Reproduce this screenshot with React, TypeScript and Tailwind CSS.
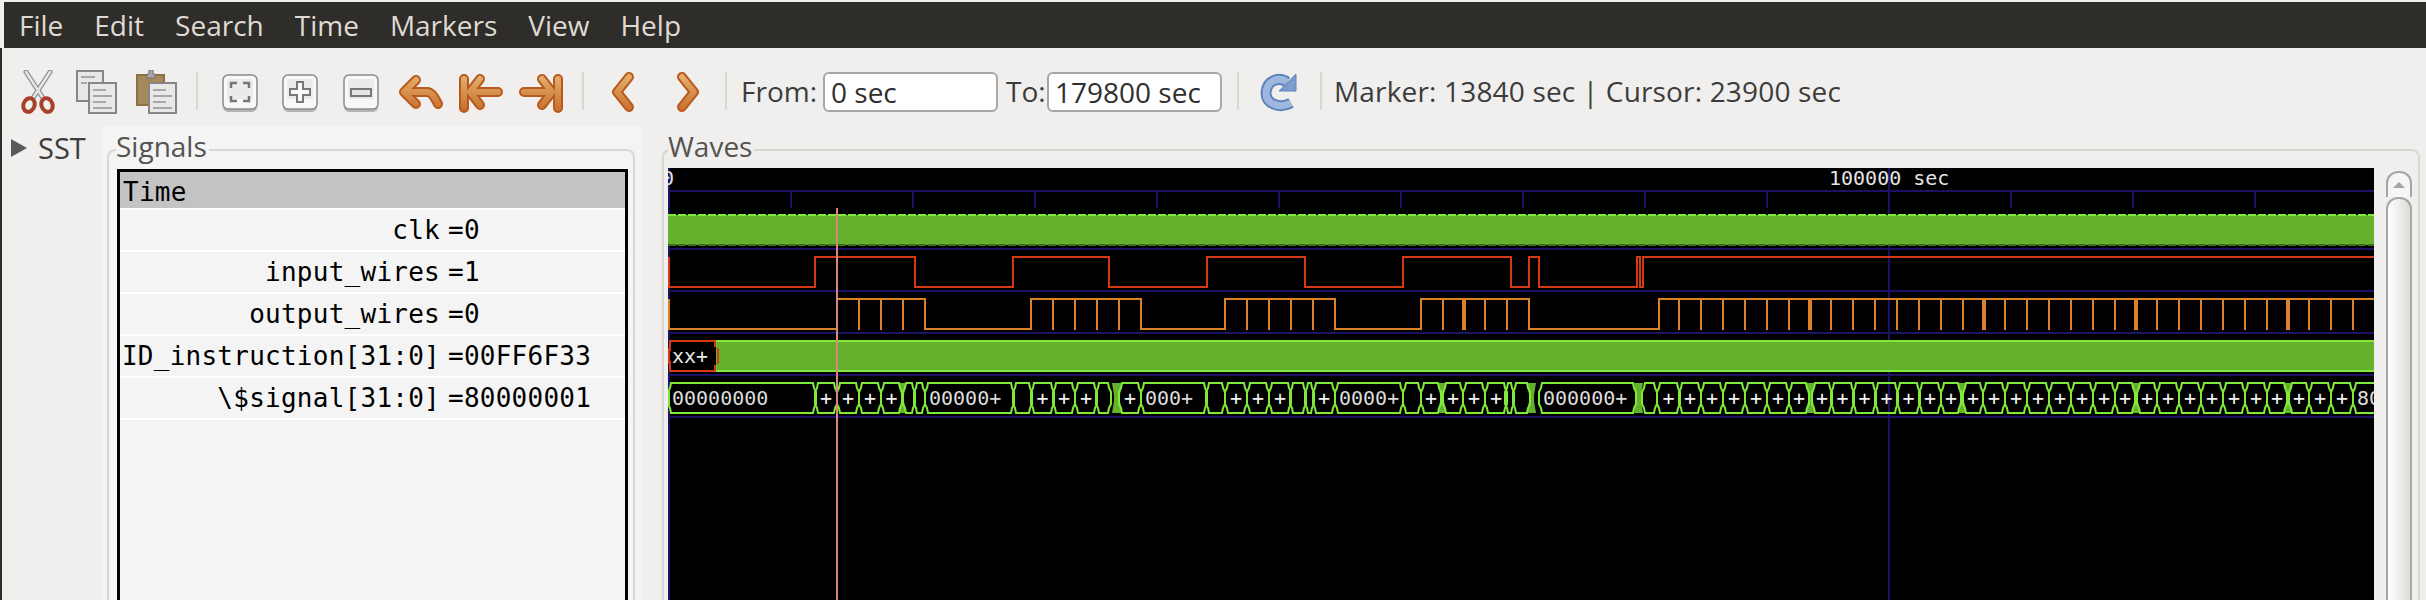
import React from "react"

const MONO = "font-['DejaVu_Sans_Mono',monospace]"
const GREEN = "#65b02d"
const BRIGHT = "#80ea38"
const NAVY = "#1b1264"
const RED = "#d63a14"
const ORANGE = "#db8226"

const menus = ["File", "Edit", "Search", "Time", "Markers", "View", "Help"]

const signals = [
  { name: "clk", value: "=0" },
  { name: "input_wires", value: "=1" },
  { name: "output_wires", value: "=0" },
  { name: "ID_instruction[31:0]", value: "=00FF6F33" },
  { name: "\\$signal[31:0]", value: "=80000001" },
]

// wave x positions, in page pixels (the svg viewBox starts at 668,168)
const ticks = [791, 913, 1035, 1157, 1279, 1401, 1523, 1645, 1767, 2011, 2133, 2255]
const rowLines = [249, 291, 333, 375, 417]

const inputEdges = [815, 915, 1013, 1109, 1207, 1305, 1403, 1511, 1529, 1539, 1637, 1640, 1643]
const outputEdges = [837, 925, 1031, 1141, 1225, 1335, 1421, 1529, 1659]
const spikes = [
  859, 881, 903, 1053, 1075, 1097, 1119, 1247, 1269, 1291, 1313, 1443, 1485, 1507, 1679, 1701, 1723, 1745, 1767, 1789,
  1831, 1853, 1875, 1897, 1919, 1941, 1963, 2005, 2027, 2049, 2071, 2093, 2115, 2157, 2179, 2201, 2223, 2245, 2267,
  2309, 2331, 2353,
]
const thickSpikes = [1464, 1810, 1984, 2136, 2288]

const busBoxes: [number, number, string?][] = [
  [671, 813, "00000000"], [818, 834, "+"], [840, 856, "+"], [862, 878, "+"], [884, 899, "+"], [906, 912], [917, 922],
  [928, 1011, "00000+"], [1016, 1029], [1034, 1051, "+"], [1056, 1072, "+"], [1078, 1094, "+"], [1099, 1108],
  [1122, 1138, "+"], [1144, 1204, "000+"], [1209, 1222], [1228, 1244, "+"], [1250, 1266, "+"], [1272, 1288, "+"],
  [1293, 1303], [1308, 1311], [1316, 1332, "+"], [1338, 1400, "0000+"], [1406, 1418], [1424, 1438, "+"],
  [1446, 1460, "+"], [1466, 1482, "+"], [1488, 1504, "+"], [1508, 1511], [1516, 1527], [1542, 1633, "000000+"],
  [1645, 1654], [1660, 1677, "+"], [1682, 1698, "+"], [1704, 1720, "+"], [1726, 1742, "+"], [1748, 1764, "+"],
  [1770, 1786, "+"], [1792, 1806, "+"], [1815, 1829, "+"], [1834, 1851, "+"], [1856, 1873, "+"], [1878, 1895, "+"],
  [1900, 1917, "+"], [1922, 1938, "+"], [1944, 1958, "+"], [1966, 1980, "+"], [1986, 2002, "+"], [2008, 2024, "+"],
  [2030, 2046, "+"], [2052, 2068, "+"], [2074, 2090, "+"], [2096, 2112, "+"], [2118, 2132, "+"], [2140, 2154, "+"],
  [2160, 2176, "+"], [2182, 2198, "+"], [2204, 2220, "+"], [2226, 2242, "+"], [2248, 2264, "+"], [2270, 2284, "+"],
  [2292, 2306, "+"], [2312, 2328, "+"], [2334, 2350, "+"], [2356, 2390, "80000001"],
]
const busFills = [[899, 906], [1112, 1122], [1438, 1446], [1527, 1536], [1634, 1643], [1806, 1815], [1958, 1966], [2132, 2140], [2284, 2292]]

const stepPath = (edges: number[], startHigh: boolean, high: number, low: number) => {
  let level = startHigh
  let d = `M668 ${level ? high : low}`
  edges.forEach((x) => {
    d += ` L${x} ${level ? high : low}`
    level = !level
    d += ` L${x} ${level ? high : low}`
  })
  return d + ` L2374 ${level ? high : low}`
}

const Waveform = () => {
  return (
    <svg width={1706} height={432} viewBox="668 168 1706 432" className={`block bg-black ${MONO}`}>
      <line x1={669} y1={168} x2={669} y2={600} stroke={NAVY} strokeWidth={2} />
      <line x1={1889} y1={168} x2={1889} y2={600} stroke={NAVY} strokeWidth={2} />
      <line x1={668} y1={191} x2={2374} y2={191} stroke={NAVY} strokeWidth={2} />
      {ticks.map((x) => (
        <line key={x} x1={x} y1={191} x2={x} y2={208} stroke={NAVY} strokeWidth={2} />
      ))}
      {rowLines.map((y) => (
        <line key={y} x1={668} y1={y} x2={2374} y2={y} stroke={NAVY} strokeWidth={2} />
      ))}
      <text x={662} y={185} fontSize={20} fill="#e4e4e4">0</text>
      <text x={1829} y={185} fontSize={20} fill="#e4e4e4">100000 sec</text>

      {/* clk */}
      <rect x={668} y={215} width={1706} height={30} fill={GREEN} />
      <line x1={668} y1={215} x2={2374} y2={215} stroke={BRIGHT} strokeWidth={2} strokeDasharray="8 2" />
      <line x1={668} y1={245} x2={2374} y2={245} stroke="#3c6f1c" strokeWidth={2} strokeDasharray="8 2" />

      {/* input_wires */}
      <path d={stepPath(inputEdges, false, 257, 287)} fill="none" stroke={RED} strokeWidth={2} />
      <line x1={669} y1={257} x2={669} y2={287} stroke={RED} strokeWidth={2} />

      {/* output_wires */}
      <path d={stepPath(outputEdges, false, 299, 329)} fill="none" stroke={ORANGE} strokeWidth={2} />
      <line x1={669} y1={299} x2={669} y2={329} stroke={ORANGE} strokeWidth={2} />
      {spikes.map((x) => (
        <line key={x} x1={x} y1={299} x2={x} y2={330} stroke={ORANGE} strokeWidth={2} />
      ))}
      {thickSpikes.map((x) => (
        <rect key={x} x={x - 2} y={299} width={4} height={31} fill={ORANGE} />
      ))}

      {/* ID_instruction */}
      <rect x={716} y={341} width={1658} height={30} fill={GREEN} />
      <line x1={716} y1={341} x2={2374} y2={341} stroke={BRIGHT} strokeWidth={2} />
      <line x1={716} y1={371} x2={2374} y2={371} stroke={BRIGHT} strokeWidth={2} />
      <path d="M670 351 V341 H715 V347 M715 365 V371 H670 V361" fill="none" stroke={RED} strokeWidth={2} />
      <line x1={718} y1={348} x2={718} y2={364} stroke={RED} strokeWidth={2} />
      <line x1={669} y1={348} x2={669} y2={364} stroke={RED} strokeWidth={2} />
      <text x={672} y={363} fontSize={20} fill="#e8e8e8">xx+</text>

      {/* $signal bus */}
      <line x1={669} y1={391} x2={669} y2={405} stroke={BRIGHT} strokeWidth={2} />
      {busFills.map(([a, b]) => (
        <polygon key={a} points={`${a},383 ${b},383 ${b - 2},395 ${b - 2},401 ${b},413 ${a},413 ${a + 2},401 ${a + 2},395`} fill={GREEN} />
      ))}
      {busBoxes.map(([a, b, label]) => (
        <g key={a}>
          <path
            d={`M${a} 383 H${b} L${b + 1} 388 L${b + 3} 392 V404 L${b + 1} 408 L${b} 413 H${a} L${a - 1} 408 L${a - 3} 404 V392 L${a - 1} 388 Z`}
            fill="none"
            stroke={BRIGHT}
            strokeWidth={2}
          />
          {label === "+" ? (
            <text x={(a + b) / 2} y={405} fontSize={20} fill="#f4f4f4" textAnchor="middle">+</text>
          ) : label ? (
            <text x={a + 1} y={405} fontSize={20} fill="#dcdcdc">{label}</text>
          ) : null}
        </g>
      ))}

      {/* marker */}
      <line x1={837} y1={208} x2={837} y2={600} stroke="#d5897c" strokeWidth={2} />
    </svg>
  )
}

const Sep = ({ className = "" }: { className?: string }) => (
  <div className={`w-[2px] h-[38px] mt-[2px] bg-[#d9d7d4] shrink-0 ${className}`} />
)

const Scissors = ({ className = "" }: { className?: string }) => (
  <svg width={36} height={44} viewBox="20 70 36 44" className={className}>
    <path d="M26 72 L43 98 M50 72 L33 98" stroke="#8d8d8d" strokeWidth={5} strokeLinecap="round" />
    <path d="M26 72 L43 98 M50 72 L33 98" stroke="#e6e6e6" strokeWidth={2.5} strokeLinecap="round" />
    <ellipse cx={29} cy={105} rx={5.5} ry={7} fill="none" stroke="#a8402c" strokeWidth={4} transform="rotate(20 29 105)" />
    <ellipse cx={47} cy={105} rx={5.5} ry={7} fill="none" stroke="#a8402c" strokeWidth={4} transform="rotate(-20 47 105)" />
  </svg>
)

const DocSheet = ({ x, y }: { x: number; y: number }) => (
  <g>
    <rect x={x} y={y} width={27} height={30} fill="#e8e8e6" stroke="#868686" strokeWidth={2} />
    <path
      d={`M${x + 4} ${y + 7} h13 M${x + 4} ${y + 13} h19 M${x + 4} ${y + 19} h13 M${x + 4} ${y + 25} h19`}
      stroke="#a8a8a8"
      strokeWidth={2}
    />
  </g>
)

const CopyIcon = ({ className = "" }: { className?: string }) => (
  <svg width={41} height={44} viewBox="76 70 41 44" className={className}>
    <rect x={77} y={71} width={26} height={30} fill="#e8e8e6" stroke="#868686" strokeWidth={2} />
    <path d="M81 77 h14 M81 83 h6" stroke="#a8a8a8" strokeWidth={2} />
    <DocSheet x={89} y={83} />
  </svg>
)

const PasteIcon = ({ className = "" }: { className?: string }) => (
  <svg width={41} height={44} viewBox="136 70 41 44" className={className}>
    <rect x={137} y={75} width={27} height={30} fill="#a5895a" stroke="#8a7044" strokeWidth={2} />
    <path d="M147 78 V74 H149 V70 H153 V74 H155 V78 Z" fill="#a8a8a8" stroke="#707070" strokeWidth={1} />
    <DocSheet x={149} y={83} />
  </svg>
)

const ZoomButton = ({ className = "", children }: { className?: string; children: React.ReactNode }) => (
  <svg width={36} height={40} viewBox="0 0 36 40" className={`mt-[4px] ${className}`}>
    <rect x={1} y={3} width={34} height={35} rx={5} fill="#b4b4b2" />
    <rect x={1} y={1} width={34} height={34} rx={5} fill="#f8f8f8" stroke="#8b8b8b" strokeWidth={1.5} />
    <rect x={5} y={5} width={26} height={20} rx={2} fill="#ebebeb" />
    {children}
  </svg>
)

const OrangeIcon = ({ id, box, d, className = "" }: { id: string; box: [number, number]; d: string; className?: string }) => (
  <svg width={box[1]} height={44} viewBox={`${box[0]} 70 ${box[1]} 44`} className={className}>
    <defs>
      <linearGradient id={id} gradientUnits="userSpaceOnUse" x1={0} y1={72} x2={0} y2={112}>
        <stop offset="0%" stopColor="#e6b774" />
        <stop offset="100%" stopColor="#c76c28" />
      </linearGradient>
    </defs>
    <path d={d} fill="none" stroke="#b9591e" strokeWidth={10} strokeLinecap="round" strokeLinejoin="round" />
    <path d={d} fill="none" stroke={`url(#${id})`} strokeWidth={6} strokeLinecap="round" strokeLinejoin="round" />
  </svg>
)

const ReloadIcon = ({ className = "" }: { className?: string }) => (
  <svg width={40} height={44} viewBox="0 0 40 44" className={className}>
    <path d="M29 12 C22 7 9 9 8 23 C8 34 22 39 33 33" fill="none" stroke="#5f83bd" strokeWidth={11} />
    <path d="M29 12 C22 7 9 9 8 23 C8 34 22 39 33 33" fill="none" stroke="#9db7de" strokeWidth={7} />
    <path d="M38 4 V21 H21 Z" fill="#7d9bcd" stroke="#5f83bd" strokeWidth={1} />
  </svg>
)

const TimeInput = ({ value, className = "" }: { value: string; className?: string }) => (
  <div className={`w-[175px] h-[40px] mt-[2px] rounded-[6px] border-2 border-[#a9a7a4] bg-white pl-[6px] leading-[36px] text-[#2f2f2f] shrink-0 ${className}`}>
    {value}
  </div>
)

const App = () => {
  return (
    <div className="w-[2426px] h-[600px] overflow-hidden flex flex-col bg-[#f0efed] font-['Open_Sans',sans-serif] pt-[2px]">
      <nav className="h-[46px] ml-[4px] shrink-0 bg-[#2f2d29] flex items-center pl-[15px] gap-[31px] text-[28px] text-[#dfdbd2]">
        {menus.map((m) => (
          <span key={m}>{m}</span>
        ))}
      </nav>

      <div className="flex-1 flex flex-col border-l-2 border-[#2f2d29]">
        <div className="h-[78px] shrink-0 flex items-start pt-[22px] pl-[18px] text-[28px] text-[#3c3c3c]">
          <Scissors />
          <CopyIcon className="ml-[20px]" />
          <PasteIcon className="ml-[19px]" />
          <Sep className="ml-[19px]" />
          <ZoomButton className="ml-[24px]">
            <path d="M9 14 V9 H15 M21 9 H27 V14 M9 22 V27 H15 M21 27 H27 V22" fill="none" stroke="#777" strokeWidth={2.5} />
          </ZoomButton>
          <ZoomButton className="ml-[24px]">
            <path d="M15 8 H21 V15 H28 V21 H21 V28 H15 V21 H8 V15 H15 Z" fill="#fafafa" stroke="#777" strokeWidth={2} />
          </ZoomButton>
          <ZoomButton className="ml-[25px]">
            <rect x={8} y={15} width={20} height={7} fill="#e4e4e4" stroke="#777" strokeWidth={2} />
          </ZoomButton>
          <OrangeIcon id="undoGrad" className="ml-[20px]" box={[398, 45]} d="M415 80 L403 92 L415 104 M403 92 H426 C431 92 434 98 437 104" />
          <OrangeIcon id="firstGrad" className="ml-[15px]" box={[458, 44]} d="M463 79 V108 M479 79 L469 92 L479 105 M469 92 H497" />
          <OrangeIcon id="lastGrad" className="ml-[16px]" box={[518, 45]} d="M557 79 V108 M541 79 L551 92 L541 105 M523 92 H551" />
          <Sep className="ml-[18px]" />
          <OrangeIcon id="prevGrad" className="ml-[27px]" box={[609, 25]} d="M627 77 L615 92 L627 107" />
          <OrangeIcon id="nextGrad" className="ml-[40px]" box={[674, 25]} d="M680 77 L692 92 L680 107" />
          <Sep className="ml-[24px]" />
          <span className="ml-[14px] w-[82px] leading-[42px]">From:</span>
          <TimeInput value="0 sec" />
          <span className="ml-[8px] w-[41px] leading-[42px]">To:</span>
          <TimeInput value="179800 sec" />
          <Sep className="ml-[15px]" />
          <ReloadIcon className="ml-[19px]" />
          <Sep className="ml-[22px]" />
          <span className="ml-[12px] leading-[42px] tracking-[0.17px] whitespace-nowrap">Marker: 13840 sec | Cursor: 23900 sec</span>
        </div>

        <div className="flex-1 flex min-h-0">
          <aside className="w-[100px] shrink-0 flex items-start pl-[8px] pt-[4px] gap-[10px] text-[29px] text-[#3c3c3c]">
            <svg width={18} height={20} viewBox="0 0 18 20" className="mt-[8px]">
              <path d="M1 1 L17 10 L1 19 Z" fill="#5a5a5a" />
            </svg>
            <span className="leading-[36px]">SST</span>
          </aside>

          <section className="w-[540px] shrink-0 bg-[#f4f4f4] pt-[23px] pl-[5px] pr-[7px]">
            <div className="relative h-full rounded-t-[8px] border-2 border-b-0 border-[#d9d7d4] pt-[18px] pl-[8px] pr-[5px]">
              <span className="absolute left-[7px] top-[-23px] bg-[#f4f4f4] pr-[2px] text-[28px] leading-[36px] text-[#55534f]">Signals</span>
              <div className={`h-full border-[3px] border-b-0 border-black text-[26px] tracking-[0.25px] leading-[36px] text-black ${MONO}`}>
                <div className="h-[36px] bg-[#c3c3c3] pl-[3px] leading-[40px]">Time</div>
                {signals.map((s) => (
                  <div key={s.name} className="h-[42px] flex items-center border-t-2 border-white whitespace-pre">
                    <span className="w-[320px] text-right shrink-0">{s.name}</span>
                    <span className="ml-[8px]">{s.value}</span>
                  </div>
                ))}
                <div className="border-t-2 border-white" />
              </div>
            </div>
          </section>

          <section className="flex-1 pt-[23px] pl-[20px] pr-[6px]">
            <div className="relative h-full rounded-t-[8px] border-2 border-b-0 border-[#d9d7d4] pt-[17px] pl-[4px] flex">
              <span className="absolute left-[4px] top-[-23px] bg-[#f0efed] pr-[2px] text-[28px] leading-[36px] text-[#55534f]">Waves</span>
              <Waveform />
              <div className="ml-[12px] mt-[3px] w-[26px] flex flex-col items-stretch">
                <div className="h-[26px] rounded-t-[12px] border-2 border-b-0 border-[#a8a6a3] bg-[#f6f6f6] flex justify-center pt-[9px]">
                  <div className="w-0 h-0 border-x-[6px] border-x-transparent border-b-[6px] border-b-[#a8a6a3]" />
                </div>
                <div className="flex-1 rounded-t-[12px] border-2 border-b-0 border-[#a8a6a3] bg-gradient-to-r from-[#ffffff] to-[#dddcda]" />
              </div>
            </div>
          </section>
        </div>
      </div>
    </div>
  )
}

export default App
